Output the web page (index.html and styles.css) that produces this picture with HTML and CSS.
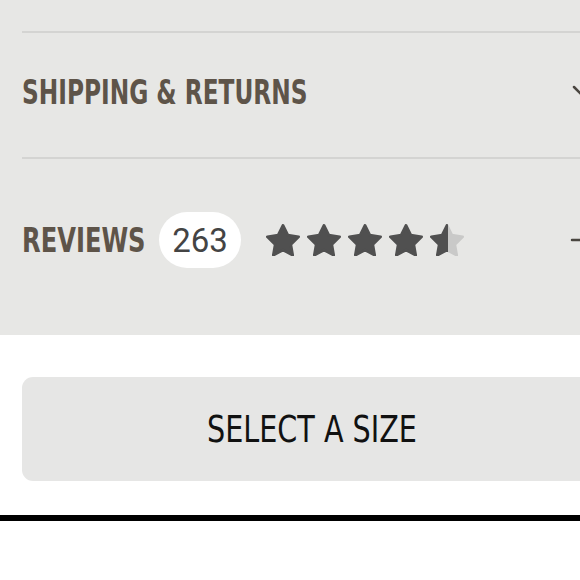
FILE: index.html
```html
<!DOCTYPE html>
<html>
<head>
<meta charset="utf-8">
<link rel="stylesheet" href="styles.css">
</head>
<body>
<div class="page">
  <section class="details">
    <div class="acc-item acc-shipping">
      <h2 class="acc-title title-shipping"><span class="narrow">SHIPPING &amp; RETURNS</span></h2>
      <svg class="chevron" width="22" height="14" viewBox="0 0 22 14"><path d="M2 2 L11 11 L20 2" fill="none" stroke="#4a4640" stroke-width="2.5" stroke-linecap="round" stroke-linejoin="round"/></svg>
    </div>
    <div class="acc-item acc-reviews">
      <div class="reviews-left">
        <h2 class="acc-title title-reviews"><span class="narrow">REVIEWS</span></h2>
        <span class="count">263</span>
        <div class="stars">
          <svg class="star" viewBox="2.3 2 19.4 18.55"><path d="M12 2.8l2.75 5.6 6.15.9-4.45 4.35 1.05 6.1L12 16.85 6.5 19.75l1.05-6.1L3.1 9.3l6.15-.9z" /></svg>
          <svg class="star" viewBox="2.3 2 19.4 18.55"><path d="M12 2.8l2.75 5.6 6.15.9-4.45 4.35 1.05 6.1L12 16.85 6.5 19.75l1.05-6.1L3.1 9.3l6.15-.9z" /></svg>
          <svg class="star" viewBox="2.3 2 19.4 18.55"><path d="M12 2.8l2.75 5.6 6.15.9-4.45 4.35 1.05 6.1L12 16.85 6.5 19.75l1.05-6.1L3.1 9.3l6.15-.9z" /></svg>
          <svg class="star" viewBox="2.3 2 19.4 18.55"><path d="M12 2.8l2.75 5.6 6.15.9-4.45 4.35 1.05 6.1L12 16.85 6.5 19.75l1.05-6.1L3.1 9.3l6.15-.9z" /></svg>
          <svg class="star" viewBox="2.3 2 19.4 18.55">
            <defs><linearGradient id="hg" gradientUnits="userSpaceOnUse" x1="2.3" x2="21.7" y1="0" y2="0"><stop offset="0.52" stop-color="#505050"/><stop offset="0.52" stop-color="#c9c9c8"/></linearGradient></defs>
            <path d="M12 2.8l2.75 5.6 6.15.9-4.45 4.35 1.05 6.1L12 16.85 6.5 19.75l1.05-6.1L3.1 9.3l6.15-.9z" fill="url(#hg)" stroke="url(#hg)"/>
          </svg>
        </div>
      </div>
      <svg class="minus" width="22" height="4" viewBox="0 0 22 4"><path d="M2 2 H20" stroke="#4a4640" stroke-width="2.5" stroke-linecap="round"/></svg>
    </div>
  </section>
  <div class="actions">
    <button class="size-btn"><span class="btn-text">SELECT A SIZE</span></button>
  </div>
  <div class="divider"></div>
  <h2 class="like-title"><span class="narrow">WE THINK YOU'LL LIKE</span></h2>
</div>
</body>
</html>
```

FILE: styles.css
```css
html, body {
  margin: 0;
  padding: 0;
  overflow: hidden;
  background: #ffffff;
}
.page {
  width: 624px;
  height: 580px;
  overflow: hidden;
  font-family: "DejaVu Sans Condensed", "DejaVu Sans", sans-serif;
}
.details {
  background: #e7e7e5;
  padding: 31px 0 0 22px;
}
.acc-item {
  display: flex;
  align-items: center;
  justify-content: space-between;
  border-top: 2px solid #d4d4d2;
}
.acc-shipping {
  height: 124px;
}
.acc-reviews {
  height: 176px;
  align-items: flex-start;
}
.acc-title {
  margin: 0;
  font-size: 33px;
  font-weight: bold;
  color: #5e5449;
  white-space: nowrap;
}
.narrow {
  display: inline-block;
  transform-origin: left center;
}
.title-shipping {
  width: 288px;
  margin-top: -5px;
}
.title-shipping .narrow {
  transform: scaleX(0.784);
}
.title-reviews {
  width: 123px;
}
.title-reviews .narrow {
  transform: scaleX(0.815);
}
.chevron {
  margin-right: 30px;
  margin-top: -6px;
}
.reviews-left {
  display: flex;
  align-items: center;
  margin-top: 53px;
}
.count {
  display: inline-flex;
  align-items: center;
  justify-content: center;
  width: 82px;
  height: 56px;
  margin-left: 14px;
  border-radius: 28px;
  background: #ffffff;
  font-family: Roboto, sans-serif;
  font-size: 33px;
  color: #444444;
}
.stars {
  display: flex;
  gap: 7px;
  margin-left: 25px;
}
.star {
  width: 34px;
  height: 32.5px;
  fill: #505050;
  stroke: #505050;
  stroke-width: 1.6;
  stroke-linejoin: round;
}
.minus {
  margin-top: 79px;
  margin-right: 32px;
}
.actions {
  padding: 42px 0 34px 22px;
}
.size-btn {
  display: flex;
  align-items: center;
  justify-content: center;
  width: 580px;
  height: 104px;
  border: none;
  border-radius: 11px;
  background: #e6e6e5;
  font-family: "DejaVu Sans Condensed", sans-serif;
  font-size: 37px;
  color: #111111;
  padding: 0;
}
.btn-text {
  display: inline-block;
  transform: scaleX(0.86);
}
.divider {
  height: 6px;
  background: #000000;
}
.like-title {
  margin: 53px 0 0 22px;
  font-size: 33px;
  font-weight: bold;
  color: #e2e2e2;
}
.like-title .narrow {
  transform: scaleX(0.8);
}
```
